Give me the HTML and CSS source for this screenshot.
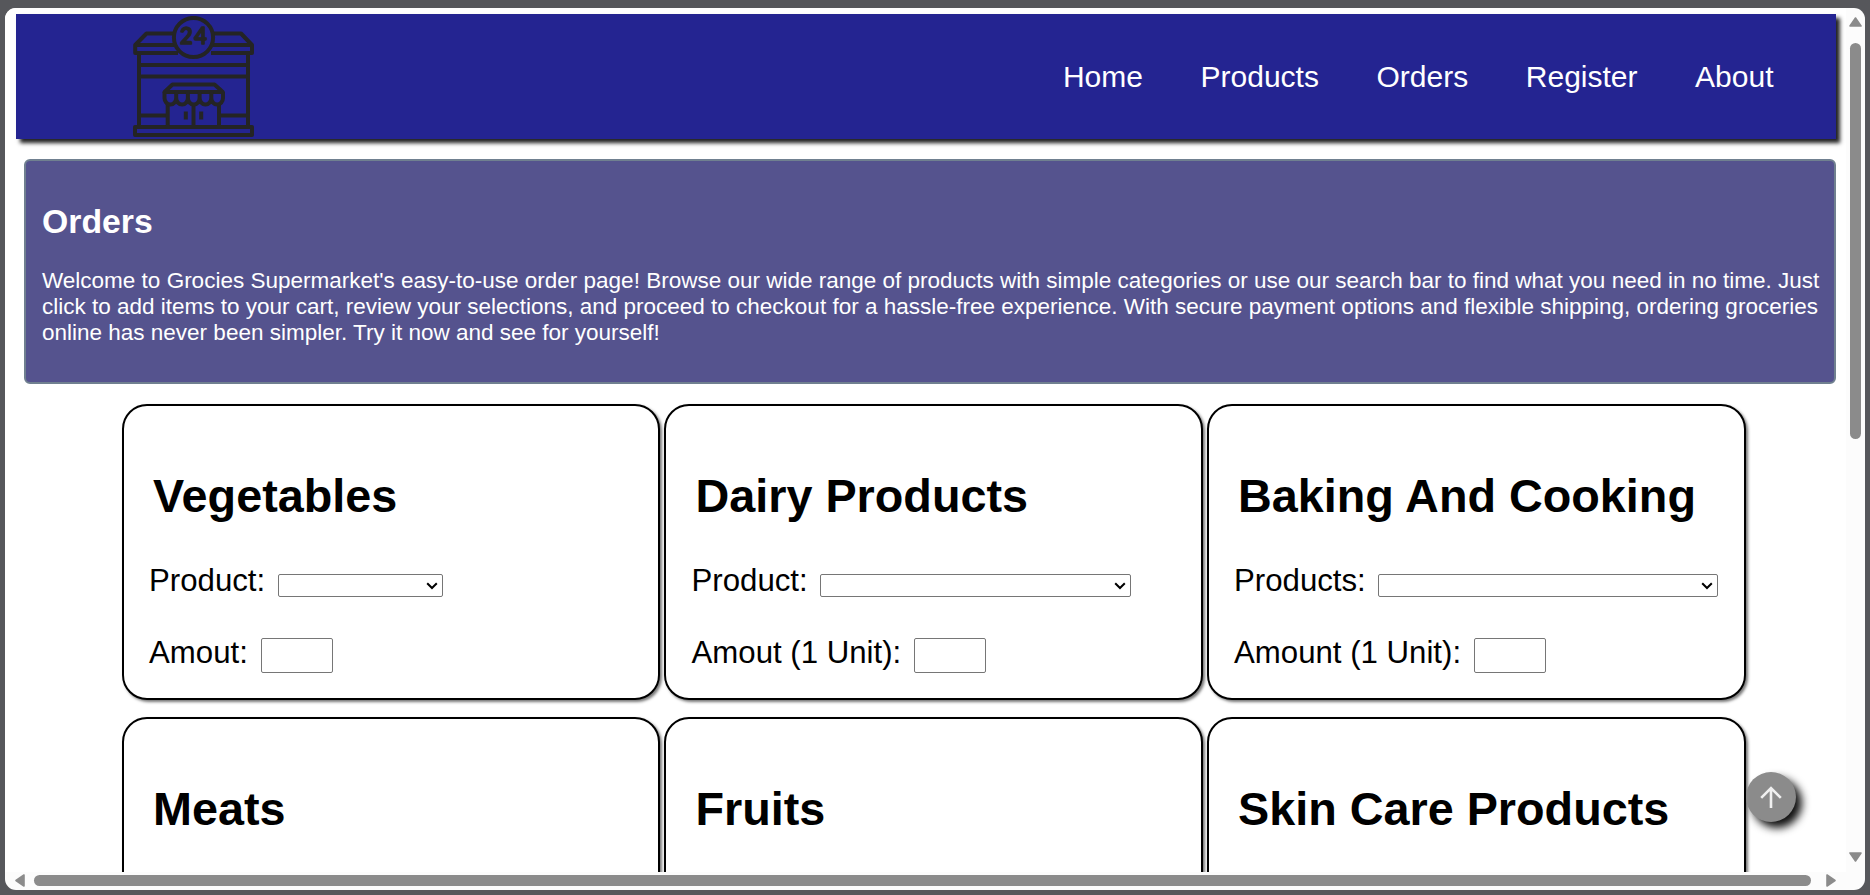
FILE: index.html
```html
<!DOCTYPE html>
<html lang="en">
<head>
<meta charset="utf-8">
<title>Orders</title>
<link rel="stylesheet" href="styles.css">
</head>
<body>
<div class="window">
  <div class="page">
    <header class="header">
      <svg class="logo" viewBox="0 0 122 122" fill="none" stroke="#242424" stroke-width="4" stroke-linejoin="round">
        <path d="M41 17.500H13.500L2.200 29V37H45M81 17.500h27L119 29V37H78M2.200 29H42M80 29h39"/>
        <circle cx="60.500" cy="21.500" r="19.600"/>
        <path d="M6 37v72M115 37v72M6 49h109M6 60.500h109M6 99.500h29M87 99.500h28M2 111h117v8H2z"/>
        <path d="M31.500 76 39.500 68.500h42L89.800 76zM34.700 87v23M60.500 87v23M86 87v23"/>
        <path d="M31.500 76v6a5.850 6.500 0 0 0 11.700 0a5.850 6.500 0 0 0 11.700 0a5.850 6.500 0 0 0 11.700 0a5.850 6.500 0 0 0 11.700 0a5.850 6.500 0 0 0 11.700 0v-6M43.200 76v7M54.900 76v7M66.600 76v7M78.300 76v7"/>
        <path d="M52.800 95.500v8M68.200 95.500v8" stroke-linejoin="miter"/>
        <text class="logo-text" x="61.200" y="28.300" text-anchor="middle">24</text>
      </svg>
      <nav class="nav"><a>Home</a><a>Products</a><a>Orders</a><a>Register</a><a>About</a></nav>
    </header>
    <section class="intro">
      <h2>Orders</h2>
      <p>Welcome to Grocies Supermarket's easy-to-use order page! Browse our wide range of products with simple categories or use our search bar to find what you need in no time. Just<br>click to add items to your cart, review your selections, and proceed to checkout for a hassle-free experience. With secure payment options and flexible shipping, ordering groceries<br>online has never been simpler. Try it now and see for yourself!</p>
    </section>
    <main class="cards">
      <article class="card">
        <h1>Vegetables</h1>
        <div class="row"><label>Product:</label><span class="select vegetables"><svg viewBox="0 0 12 8"><path d="M1.200 1.200 6 6l4.800-4.800"/></svg></span></div>
        <div class="row"><label>Amout:</label><span class="number"></span></div>
      </article>
      <article class="card middle">
        <h1>Dairy Products</h1>
        <div class="row"><label>Product:</label><span class="select dairy"><svg viewBox="0 0 12 8"><path d="M1.200 1.200 6 6l4.800-4.800"/></svg></span></div>
        <div class="row"><label>Amout (1 Unit):</label><span class="number"></span></div>
      </article>
      <article class="card">
        <h1>Baking And Cooking</h1>
        <div class="row"><label>Products:</label><span class="select baking"><svg viewBox="0 0 12 8"><path d="M1.200 1.200 6 6l4.800-4.800"/></svg></span></div>
        <div class="row"><label>Amount (1 Unit):</label><span class="number"></span></div>
      </article>
      <article class="card"><h1>Meats</h1></article>
      <article class="card middle"><h1>Fruits</h1></article>
      <article class="card"><h1>Skin Care Products</h1></article>
    </main>
    <a class="to-top"><svg viewBox="0 0 22 22"><path d="M11 22V2M1.200 11.800 11 2l9.800 9.800"/></svg></a>
  </div>
  <div class="vbar">
    <svg class="tri-v" viewBox="0 0 13 10"><path d="M6.500 1 12 9H1z"/></svg>
    <i class="vthumb"></i>
    <svg class="tri-v down" viewBox="0 0 13 10"><path d="M6.500 9 1 1h11z"/></svg>
  </div>
  <div class="hbar">
    <svg class="tri-h" viewBox="0 0 10 13"><path d="M1 6.500 9 1v11z"/></svg>
    <i class="hthumb"></i>
    <svg class="tri-h right" viewBox="0 0 10 13"><path d="M9 6.500 1 1v11z"/></svg>
  </div>
</div>
</body>
</html>
```
FILE: styles.css
```css
* { box-sizing: border-box; }
body {
  margin: 0;
  height: 895px;
  padding: 8px 5px 5px;
  overflow: hidden;
  background: #56575b;
  font-family: "Liberation Sans", Arial, sans-serif;
}
.window {
  height: 882px;
  display: grid;
  grid-template: 864px 18px / 1841px 19px;
  border-radius: 11px;
  overflow: hidden;
  background: #fcfcfc;
}
.page { position: relative; background: #fff; overflow: hidden; padding: 6px 10px 0 11px; }
.header {
  height: 125px;
  display: flex;
  justify-content: space-between;
  padding: 2px 62.5px 0 117px;
  background: #242491;
  box-shadow: 4px 4px 4px #222;
}
.logo { width: 122px; height: 122px; }
.logo-text { font-family: Lato, sans-serif; font-size: 22px; font-weight: bold; fill: #242424; stroke-width: 1.3px; letter-spacing: 1.5px; }
.nav { display: flex; gap: 57.6px; padding-top: 44px; font-size: 30px; line-height: 34px; color: #fff; }
.intro {
  height: 225px;
  margin: 20px 0 20px 8px;
  padding: 41px 15px 0 16px;
  border: 2px solid #708090;
  border-radius: 6px;
  background: #55538e;
  color: #fff;
}
.intro h2 { margin: 0; font-size: 33.75px; line-height: 38px; }
.intro p { margin: 28px 0 0; font-size: 22.5px; line-height: 26px; white-space: nowrap; }
.cards {
  display: grid;
  grid-template-columns: 538px 539px 539px;
  grid-auto-rows: 296px;
  gap: 17px 4px;
  margin-left: 106px;
}
.card {
  border: 2px solid #000;
  border-radius: 25px;
  padding: 63px 0 0 25px;
  background: #fff;
  box-shadow: 2px 2px 3px #777;
}
.middle { padding-left: 25.5px; }
.card h1 { margin: 0 0 33px 4px; font-size: 46.75px; line-height: 54px; white-space: nowrap; }
.row { height: 72px; display: flex; font-size: 31.2px; line-height: 49px; white-space: nowrap; }
.select { height: 23px; margin: 18px 0 0 12.5px; padding-right: 4px; display: flex; align-items: center; justify-content: flex-end; border: 1px solid #767676; border-radius: 2px; }
.select svg { width: 12px; height: 8px; fill: none; stroke: #000; stroke-width: 2; }
.vegetables { width: 165px; }
.dairy { width: 311px; }
.baking { width: 340px; }
.number { width: 72px; height: 35px; margin: 10px 0 0 12.8px; border: 1px solid #767676; border-radius: 2px; }
.to-top {
  position: absolute;
  left: 1741px;
  top: 764px;
  width: 50px;
  height: 50px;
  display: grid;
  place-items: center;
  border-radius: 50%;
  background: #8b8b8b;
  box-shadow: 6px 6px 9px #111;
}
.to-top svg { width: 22px; height: 22px; fill: none; stroke: #f0f0f0; stroke-width: 2.6; }
.vbar { display: flex; flex-direction: column; align-items: center; padding: 9px 4px 0 3px; }
.vthumb { width: 11px; height: 396px; margin-top: 16px; border-radius: 6px; background: #8b8b8b; }
.tri-v { width: 13px; height: 10px; flex: none; fill: #8b8b8b; stroke: #8b8b8b; stroke-width: 1.6; stroke-linejoin: round; }
.down { margin-top: 413px; }
.hbar { display: flex; align-items: center; padding: 0 0 1px 10px; }
.tri-h { width: 10px; height: 13px; fill: #8b8b8b; stroke: #8b8b8b; stroke-width: 1.6; stroke-linejoin: round; flex: none; }
.hthumb { width: 1777px; height: 11px; margin: 0 15px 0 9px; border-radius: 6px; background: #8b8b8b; flex: none; }
```
